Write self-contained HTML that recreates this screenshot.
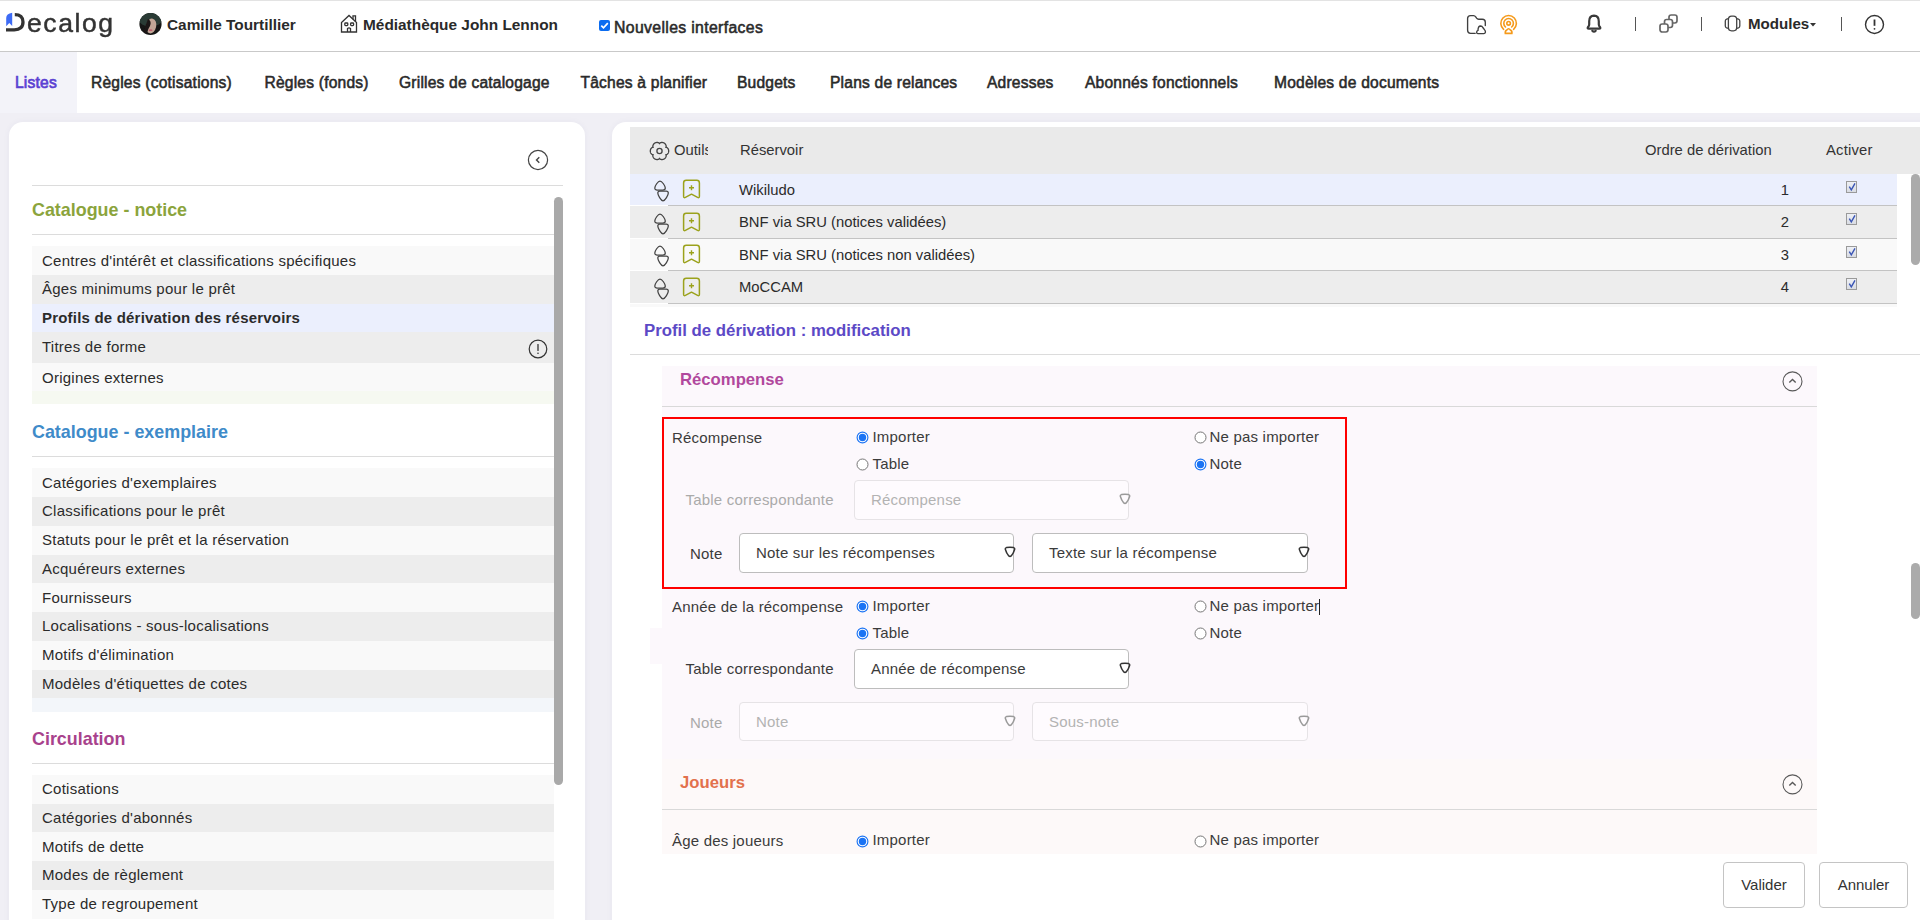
<!DOCTYPE html>
<html><head><meta charset="utf-8">
<style>
*{box-sizing:border-box;margin:0;padding:0}
html,body{width:1920px;height:920px;overflow:hidden}
body{background:#f0eff5;font-family:"Liberation Sans",sans-serif;color:#2b2b2b;position:relative}
.a{position:absolute;white-space:nowrap}
#hdr{position:absolute;left:0;top:0;width:1920px;height:52px;background:#fff;border-top:1px solid #e3e3e3;border-bottom:1px solid #c9c9c9}
#nav{position:absolute;left:0;top:52px;width:1920px;height:61px;background:#fff}
.tab{position:absolute;top:74px;font-size:15.6px;font-weight:400;color:#2a2a2a;line-height:18px;-webkit-text-stroke-width:.55px;letter-spacing:.2px}
#lp{position:absolute;left:9px;top:122px;width:576px;height:820px;background:#fff;border-radius:14px;box-shadow:0 0 6px rgba(60,50,120,.05)}
#rp{position:absolute;left:612px;top:122px;width:1330px;height:820px;background:#fff;border-radius:14px;box-shadow:0 0 6px rgba(60,50,120,.05)}
.sec{position:absolute;left:32px;font-size:17.9px;font-weight:700;line-height:20px}
.hl{position:absolute;height:1px;background:#dcdcdc}
.row{position:absolute;left:32px;width:522px;height:29px;font-size:15px;letter-spacing:.25px;line-height:29px;padding-left:10px;color:#2b2b2b}
.r0{background:#f9f9f9}.r1{background:#ededed}
.th{top:141px;font-size:14.8px;line-height:18px;color:#333}
.td{font-size:14.8px;line-height:18px;color:#2b2b2b}
.cb{left:1846px;width:11px;height:12px;border:1px solid #9a9a9a;background:linear-gradient(#eef0f5,#d9dce3)}
.sh{font-size:16.7px;font-weight:700;line-height:20px}
.fl{font-size:15px;line-height:18px;letter-spacing:.2px}
.btn{top:862px;height:46px;border:1px solid #c4c4c4;border-radius:4px;background:#fff;font-size:15px;line-height:44px;text-align:center;color:#333}
</style></head><body>
<div id="hdr"></div>
<div id="nav"></div>
<div class="a" style="left:0;top:52px;width:77px;height:61px;background:#f3f3f9"></div>


<!-- header content -->
<svg class="a" style="left:4px;top:10px" width="24" height="26" viewBox="0 0 24 26">
  <path d="M2.2 16.2 V8 Q2.2 3.6 8.2 2.8 V16 L5.3 13 Z" fill="#3d6bf5"/>
  <path d="M2 19.8 L10.3 19.8 Q19 19.8 19 12 Q19 4.6 10.8 4.6" fill="none" stroke="#333" stroke-width="3.3"/>
</svg>
<div class="a" style="left:27px;top:5px;font-size:25.5px;letter-spacing:1.5px;color:#333;line-height:36px;-webkit-text-stroke:.45px #333;transform:scaleX(1.04);transform-origin:0 0">ecalog</div>
<svg class="a" style="left:139px;top:13px" width="23" height="23" viewBox="0 0 23 23">
<defs><clipPath id="av"><circle cx="11.5" cy="11" r="11.1"/></clipPath><filter id="bl"><feGaussianBlur stdDeviation=".6"/></filter></defs>
<g clip-path="url(#av)"><rect width="23" height="23" fill="#161615"/>
<ellipse cx="11.5" cy="5" rx="12" ry="9" fill="#2a3b35"/>
<g filter="url(#bl)"><ellipse cx="12.2" cy="13" rx="5" ry="7.5" fill="#c2a596" transform="rotate(12 12.2 13)"/>
<path d="M9 6 Q13 8 11 13 Q9 16 8 20 L5 20 Q6 12 9 6 Z" fill="#1e1714"/>
<ellipse cx="11.6" cy="17.2" rx="1.9" ry=".9" fill="#c0606e"/></g></g></svg>

<div class="a m" style="left:167px;top:16px;font-size:15.4px;font-weight:700;color:#2a2a2a;line-height:18px">Camille Tourtillier</div>
<svg class="a" style="left:340px;top:14px" width="19" height="19" viewBox="0 0 19 19" fill="none" stroke="#333" stroke-width="1.3">
  <path d="M1.5 18 V8.5 L9 1.5 L16.5 8.5 V18 Z"/><path d="M13 5.2 V1.8 H15.5 V7.5"/>
  <rect x="4.8" y="9" width="3" height="2.6" rx=".8"/><rect x="10.6" y="9" width="3" height="2.6" rx=".8"/>
  <path d="M7.5 18 V14.5 Q9 13.2 10.5 14.5 V18"/>
</svg>
<div class="a m" style="left:363px;top:16px;font-size:15.4px;font-weight:700;color:#2a2a2a;line-height:18px">Médiathèque John Lennon</div>
<div class="a" style="left:599px;top:20px;width:11px;height:11px;border-radius:2px;background:#0b6cf0"></div>
<svg class="a" style="left:599px;top:20px" width="11" height="11" viewBox="0 0 11 11"><path d="M2.3 5.6 L4.5 7.8 L8.8 3.2" fill="none" stroke="#fff" stroke-width="1.7"/></svg>
<div class="a m" style="left:614px;top:19px;font-size:15.8px;font-weight:400;color:#2a2a2a;line-height:18px;-webkit-text-stroke-width:.55px;letter-spacing:.35px">Nouvelles interfaces</div>

<svg class="a" style="left:1466px;top:14px" width="22" height="21" viewBox="0 0 22 21" fill="none" stroke="#3f3f3f" stroke-width="1.35" stroke-linejoin="round" stroke-linecap="round">
  <path d="M9.2 19.3 H4.6 Q1.6 19.3 1.6 16.3 V4.6 Q1.6 1.7 4.6 1.6 H7.6 Q8.9 1.6 9.7 2.8 L10.6 4.2 Q11.3 5.2 12.6 5.2 H16.3 Q19.3 5.2 19.3 8.2 V11.6"/>
  <path d="M11.9 19.6 Q10.6 19.6 10.6 18.2 Q10.6 16.8 12 16.4 Q12 12.1 14.6 12 Q16.1 12 16.8 13.5 L18.8 16.2 Q19.6 17.2 19.4 18.3 Q19.1 19.6 17.8 19.6 Z"/>
</svg>
<svg class="a" style="left:1499px;top:14px" width="20" height="21" viewBox="0 0 20 21" fill="none" stroke="#f59a1b" stroke-width="1.6" stroke-linecap="round">
  <circle cx="9.6" cy="9.3" r="1.8"/><path d="M6.5 13 A4.8 4.8 0 1 1 12.7 13"/><path d="M4.6 15.3 A7.8 7.8 0 1 1 14.6 15.3"/>
  <path d="M6.3 19.4 Q5.9 16.8 7.8 16 Q9.6 13.6 11.4 16 Q13.3 16.8 12.9 19.4 Z"/>
</svg>
<svg class="a" style="left:1584px;top:13px" width="20" height="21" viewBox="0 0 20 21" fill="none" stroke="#3a3a3a" stroke-width="2.2" stroke-linejoin="round" stroke-linecap="round">
  <path d="M10 2.6 Q14.8 2.8 14.8 8.2 V11.4 Q14.8 12.8 16 14 Q17 15.6 15.2 15.6 H4.8 Q3 15.6 4 14 Q5.2 12.8 5.2 11.4 V8.2 Q5.2 2.8 10 2.6 Z"/><path d="M8.3 17.8 Q10 19.6 11.7 17.8" stroke-width="2.2"/>
</svg>
<div class="a" style="left:1635px;top:17px;width:1px;height:14px;background:#555"></div>
<svg class="a" style="left:1658px;top:14px" width="22" height="20" viewBox="0 0 22 20" fill="#fff" stroke="#666" stroke-width="1.7">
  <rect x="11" y="1" width="8" height="8" rx="2.2"/><rect x="6.5" y="5.5" width="8" height="8" rx="2.2"/><rect x="2" y="10" width="8" height="8" rx="2.2"/>
</svg>
<div class="a" style="left:1701px;top:17px;width:1px;height:14px;background:#555"></div>
<svg class="a" style="left:1724px;top:15px" width="17" height="17" viewBox="0 0 17 17" fill="none" stroke="#444" stroke-width="1.3">
  <rect x="4.4" y="1.2" width="8.3" height="14.6" rx="3.2"/><path d="M4.4 3.6 L2.6 4.1 Q1.3 4.5 1.3 5.9 V11.1 Q1.3 12.5 2.6 12.9 L4.4 13.4"/><path d="M12.7 3.6 L14.5 4.1 Q15.8 4.5 15.8 5.9 V11.1 Q15.8 12.5 14.5 12.9 L12.7 13.4"/>
</svg>
<div class="a m" style="left:1748px;top:15px;font-size:15.1px;font-weight:700;color:#2a2a2a;line-height:18px">Modules</div>
<svg class="a" style="left:1810px;top:23px" width="6" height="4" viewBox="0 0 6 4"><path d="M0 0 H6 L3 3.5 Z" fill="#333"/></svg>
<div class="a" style="left:1841px;top:17px;width:1px;height:14px;background:#555"></div>
<svg class="a" style="left:1864px;top:14px" width="21" height="21" viewBox="0 0 21 21" fill="none" stroke="#333" stroke-width="1.4">
  <circle cx="10.5" cy="10.5" r="9"/><path d="M10.5 5.5 V11.8" stroke-width="1.8"/><circle cx="10.5" cy="14.8" r=".9" fill="#333" stroke="none"/>
</svg>

<!-- tabs -->
<div class="a m tab" style="left:15px;color:#5b41d2;-webkit-text-stroke-width:.7px">Listes</div>
<div class="a m tab" style="left:91px">Règles (cotisations)</div>
<div class="a m tab" style="left:264.5px">Règles (fonds)</div>
<div class="a m tab" style="left:399px">Grilles de catalogage</div>
<div class="a m tab" style="left:580.5px">Tâches à planifier</div>
<div class="a m tab" style="left:737px">Budgets</div>
<div class="a m tab" style="left:830px">Plans de relances</div>
<div class="a m tab" style="left:987px">Adresses</div>
<div class="a m tab" style="left:1085px">Abonnés fonctionnels</div>
<div class="a m tab" style="left:1274px">Modèles de documents</div>

<div id="lp"></div>
<svg class="a" style="left:527px;top:149px" width="22" height="22" viewBox="0 0 22 22" fill="none" stroke="#444" stroke-width="1.2"><circle cx="11" cy="11" r="9.6"/><path d="M12.3 8.2 L9.5 11 L12.3 13.8" stroke-width="1.4"/></svg>
<div class="hl" style="left:32px;top:185px;width:531px"></div>
<div class="a m sec" style="top:200px;color:#8ba43c">Catalogue - notice</div>
<div class="hl" style="left:32px;top:234px;width:522px"></div>
<div class="a m row r0" style="top:246px;">Centres d'intérêt et classifications spécifiques</div>
<div class="a m row r1" style="top:275px;line-height:27px;">Âges minimums pour le prêt</div>
<div class="a m row " style="top:304px;background:#ebeffd;font-weight:700;letter-spacing:.2px;line-height:27px;">Profils de dérivation des réservoirs</div>
<div class="a m row r1" style="top:332px;height:31px;line-height:29px;">Titres de forme</div>
<div class="a m row r0" style="top:363px;">Origines externes</div>
<div class="a" style="left:32px;top:391px;width:522px;height:13px;background:#f6f9f1"></div>
<div class="a m sec" style="top:422px;color:#3f8bc9">Catalogue - exemplaire</div>
<div class="hl" style="left:32px;top:456px;width:522px"></div>
<div class="a m row r0" style="top:468px;">Catégories d'exemplaires</div>
<div class="a m row r1" style="top:497px;line-height:27px;">Classifications pour le prêt</div>
<div class="a m row r0" style="top:526px;line-height:27px;">Statuts pour le prêt et la réservation</div>
<div class="a m row r1" style="top:555px;line-height:27px;">Acquéreurs externes</div>
<div class="a m row r0" style="top:583px;">Fournisseurs</div>
<div class="a m row r1" style="top:612px;line-height:27px;">Localisations - sous-localisations</div>
<div class="a m row r0" style="top:641px;line-height:27px;">Motifs d'élimination</div>
<div class="a m row r1" style="top:670px;line-height:27px;">Modèles d'étiquettes de cotes</div>
<div class="a" style="left:32px;top:698px;width:522px;height:14px;background:#f3f6fa"></div>
<div class="a m sec" style="top:729px;color:#a8428c">Circulation</div>
<div class="hl" style="left:32px;top:763px;width:522px"></div>
<div class="a m row r0" style="top:775px;line-height:27px;">Cotisations</div>
<div class="a m row r1" style="top:804px;line-height:27px;">Catégories d'abonnés</div>
<div class="a m row r0" style="top:832px;">Motifs de dette</div>
<div class="a m row r1" style="top:861px;line-height:27px;">Modes de règlement</div>
<div class="a m row r0" style="top:890px;line-height:27px;">Type de regroupement</div>
<svg class="a" style="left:527.5px;top:338.5px" width="20" height="20" viewBox="0 0 20 20" fill="none" stroke="#333" stroke-width="1.2"><circle cx="10" cy="10" r="8.8"/><path d="M10 5.6 V11.4" stroke-width="1.3" stroke-linecap="round"/><circle cx="10" cy="14.2" r=".8" fill="#333" stroke="none"/></svg>
<div class="a" style="left:554px;top:197px;width:9px;height:588px;border-radius:5px;background:#a9a9a9"></div>
<div id="rp"></div>
<div class="a" style="left:630px;top:127px;width:1290px;height:47px;background:#eaeaea"></div>
<svg class="a" style="left:649px;top:141px" width="21" height="20" viewBox="0 0 21 20" fill="none" stroke="#444" stroke-width="1.3" stroke-linejoin="round">
<path d="M10.50 2.70 L10.70 2.29 L10.91 2.09 L11.14 1.93 L11.36 1.81 L11.59 1.70 L11.83 1.62 L12.06 1.56 L12.30 1.51 L12.55 1.48 L12.79 1.46 L13.03 1.45 L13.27 1.47 L13.51 1.49 L13.75 1.53 L13.99 1.58 L14.22 1.65 L14.45 1.72 L14.67 1.82 L14.89 1.92 L15.10 2.03 L15.31 2.16 L15.50 2.30 L15.69 2.44 L15.87 2.60 L16.05 2.77 L16.21 2.95 L16.36 3.14 L16.50 3.33 L16.63 3.54 L16.75 3.75 L16.86 3.97 L16.95 4.19 L17.03 4.42 L17.09 4.66 L17.14 4.91 L17.17 5.16 L17.17 5.42 L17.15 5.68 L17.08 5.97 L16.82 6.35 L17.28 6.32 L17.56 6.40 L17.81 6.52 L18.03 6.65 L18.23 6.80 L18.42 6.96 L18.59 7.13 L18.76 7.32 L18.91 7.51 L19.04 7.71 L19.17 7.92 L19.28 8.13 L19.38 8.36 L19.46 8.58 L19.53 8.81 L19.59 9.04 L19.64 9.28 L19.67 9.52 L19.69 9.76 L19.70 10.00 L19.69 10.24 L19.67 10.48 L19.64 10.72 L19.59 10.96 L19.53 11.19 L19.46 11.42 L19.38 11.64 L19.28 11.87 L19.17 12.08 L19.04 12.29 L18.91 12.49 L18.76 12.68 L18.59 12.87 L18.42 13.04 L18.23 13.20 L18.03 13.35 L17.81 13.48 L17.56 13.60 L17.28 13.68 L16.82 13.65 L17.08 14.03 L17.15 14.32 L17.17 14.58 L17.17 14.84 L17.14 15.09 L17.09 15.34 L17.03 15.58 L16.95 15.81 L16.86 16.03 L16.75 16.25 L16.63 16.46 L16.50 16.67 L16.36 16.86 L16.21 17.05 L16.05 17.23 L15.87 17.40 L15.69 17.56 L15.50 17.70 L15.31 17.84 L15.10 17.97 L14.89 18.08 L14.67 18.18 L14.45 18.28 L14.22 18.35 L13.99 18.42 L13.75 18.47 L13.51 18.51 L13.27 18.53 L13.03 18.55 L12.79 18.54 L12.55 18.52 L12.30 18.49 L12.06 18.44 L11.83 18.38 L11.59 18.30 L11.36 18.19 L11.14 18.07 L10.91 17.91 L10.70 17.71 L10.50 17.30 L10.30 17.71 L10.09 17.91 L9.86 18.07 L9.64 18.19 L9.41 18.30 L9.17 18.38 L8.94 18.44 L8.70 18.49 L8.45 18.52 L8.21 18.54 L7.97 18.55 L7.73 18.53 L7.49 18.51 L7.25 18.47 L7.01 18.42 L6.78 18.35 L6.55 18.28 L6.33 18.18 L6.11 18.08 L5.90 17.97 L5.69 17.84 L5.50 17.70 L5.31 17.56 L5.13 17.40 L4.95 17.23 L4.79 17.05 L4.64 16.86 L4.50 16.67 L4.37 16.46 L4.25 16.25 L4.14 16.03 L4.05 15.81 L3.97 15.58 L3.91 15.34 L3.86 15.09 L3.83 14.84 L3.83 14.58 L3.85 14.32 L3.92 14.03 L4.18 13.65 L3.72 13.68 L3.44 13.60 L3.19 13.48 L2.97 13.35 L2.77 13.20 L2.58 13.04 L2.41 12.87 L2.24 12.68 L2.09 12.49 L1.96 12.29 L1.83 12.08 L1.72 11.87 L1.62 11.64 L1.54 11.42 L1.47 11.19 L1.41 10.96 L1.36 10.72 L1.33 10.48 L1.31 10.24 L1.30 10.00 L1.31 9.76 L1.33 9.52 L1.36 9.28 L1.41 9.04 L1.47 8.81 L1.54 8.58 L1.62 8.36 L1.72 8.13 L1.83 7.92 L1.96 7.71 L2.09 7.51 L2.24 7.32 L2.41 7.13 L2.58 6.96 L2.77 6.80 L2.97 6.65 L3.19 6.52 L3.44 6.40 L3.72 6.32 L4.18 6.35 L3.92 5.97 L3.85 5.68 L3.83 5.42 L3.83 5.16 L3.86 4.91 L3.91 4.66 L3.97 4.42 L4.05 4.19 L4.14 3.97 L4.25 3.75 L4.37 3.54 L4.50 3.33 L4.64 3.14 L4.79 2.95 L4.95 2.77 L5.13 2.60 L5.31 2.44 L5.50 2.30 L5.69 2.16 L5.90 2.03 L6.11 1.92 L6.33 1.82 L6.55 1.72 L6.78 1.65 L7.01 1.58 L7.25 1.53 L7.49 1.49 L7.73 1.47 L7.97 1.45 L8.21 1.46 L8.45 1.48 L8.70 1.51 L8.94 1.56 L9.17 1.62 L9.41 1.70 L9.64 1.81 L9.86 1.93 L10.09 2.09 L10.30 2.29 Z"/>
<circle cx="10.5" cy="10" r="2.6"/></svg>
<div class="a" style="left:674px;top:141px;width:34px;overflow:hidden;font-size:14.8px;line-height:18px;color:#333">Outils</div>
<div class="a m th" style="left:740px">Réservoir</div>
<div class="a m th" style="left:1645px">Ordre de dérivation</div>
<div class="a m th" style="left:1826px;letter-spacing:.2px">Activer</div>
<div class="a" style="left:630px;top:174px;width:1267px;height:31px;background:#ebeffd"></div>
<div class="a" style="left:668px;top:205px;width:1229px;height:1px;background:#c3c3c3"></div>
<svg class="a" style="left:653px;top:180px" width="17" height="22" viewBox="0 0 17 22" fill="none" stroke="#444" stroke-width="1.25" stroke-linejoin="round"><path d="M7 1 C9 1 12.3 6 12.3 8 C12.3 9.5 11.2 10 9.8 10 H4.2 C2.8 10 1.8 9.5 1.8 8 C1.8 6 5 1 7 1 Z"/><path d="M6.9 11 H13.2 C14.6 11 15.3 11.6 15.3 13 C15.3 15 12.2 20.8 10 20.8 C7.9 20.8 4.8 15 4.8 13 C4.8 11.6 5.5 11 6.9 11 Z"/></svg>
<svg class="a" style="left:682px;top:179px" width="19" height="21" viewBox="0 0 19 21" fill="none" stroke="#9ba21c" stroke-width="1.5" stroke-linejoin="round"><path d="M4.2 1.3 H14.8 Q17.4 1.3 17.4 3.9 V17.2 Q17.4 19.2 15.6 18.4 L9.5 15.2 L3.4 18.4 Q1.6 19.2 1.6 17.2 V3.9 Q1.6 1.3 4.2 1.3 Z"/><path d="M9.5 6.3 V11.3 M7 8.8 H12" stroke-width="1.4"/></svg>
<div class="a m td" style="left:739px;top:181px">Wikiludo</div>
<div class="a m td" style="left:1700px;width:89px;text-align:right;top:181px">1</div>
<div class="a cb" style="top:181px"></div>
<svg class="a" style="left:1847px;top:182px" width="10" height="10" viewBox="0 0 10 10"><path d="M2.3 4.6 L4.3 7.8 L8 1.3" fill="none" stroke="#3a55b5" stroke-width="1.4"/></svg>
<div class="a" style="left:630px;top:206px;width:1267px;height:32px;background:#ededed"></div>
<div class="a" style="left:668px;top:238px;width:1229px;height:1px;background:#c3c3c3"></div>
<svg class="a" style="left:653px;top:213px" width="17" height="22" viewBox="0 0 17 22" fill="none" stroke="#444" stroke-width="1.25" stroke-linejoin="round"><path d="M7 1 C9 1 12.3 6 12.3 8 C12.3 9.5 11.2 10 9.8 10 H4.2 C2.8 10 1.8 9.5 1.8 8 C1.8 6 5 1 7 1 Z"/><path d="M6.9 11 H13.2 C14.6 11 15.3 11.6 15.3 13 C15.3 15 12.2 20.8 10 20.8 C7.9 20.8 4.8 15 4.8 13 C4.8 11.6 5.5 11 6.9 11 Z"/></svg>
<svg class="a" style="left:682px;top:212px" width="19" height="21" viewBox="0 0 19 21" fill="none" stroke="#9ba21c" stroke-width="1.5" stroke-linejoin="round"><path d="M4.2 1.3 H14.8 Q17.4 1.3 17.4 3.9 V17.2 Q17.4 19.2 15.6 18.4 L9.5 15.2 L3.4 18.4 Q1.6 19.2 1.6 17.2 V3.9 Q1.6 1.3 4.2 1.3 Z"/><path d="M9.5 6.3 V11.3 M7 8.8 H12" stroke-width="1.4"/></svg>
<div class="a m td" style="left:739px;top:213px">BNF via SRU (notices validées)</div>
<div class="a m td" style="left:1700px;width:89px;text-align:right;top:213px">2</div>
<div class="a cb" style="top:213px"></div>
<svg class="a" style="left:1847px;top:214px" width="10" height="10" viewBox="0 0 10 10"><path d="M2.3 4.6 L4.3 7.8 L8 1.3" fill="none" stroke="#3a55b5" stroke-width="1.4"/></svg>
<div class="a" style="left:630px;top:239px;width:1267px;height:31px;background:#f9f9f9"></div>
<div class="a" style="left:668px;top:270px;width:1229px;height:1px;background:#c3c3c3"></div>
<svg class="a" style="left:653px;top:245px" width="17" height="22" viewBox="0 0 17 22" fill="none" stroke="#444" stroke-width="1.25" stroke-linejoin="round"><path d="M7 1 C9 1 12.3 6 12.3 8 C12.3 9.5 11.2 10 9.8 10 H4.2 C2.8 10 1.8 9.5 1.8 8 C1.8 6 5 1 7 1 Z"/><path d="M6.9 11 H13.2 C14.6 11 15.3 11.6 15.3 13 C15.3 15 12.2 20.8 10 20.8 C7.9 20.8 4.8 15 4.8 13 C4.8 11.6 5.5 11 6.9 11 Z"/></svg>
<svg class="a" style="left:682px;top:244px" width="19" height="21" viewBox="0 0 19 21" fill="none" stroke="#9ba21c" stroke-width="1.5" stroke-linejoin="round"><path d="M4.2 1.3 H14.8 Q17.4 1.3 17.4 3.9 V17.2 Q17.4 19.2 15.6 18.4 L9.5 15.2 L3.4 18.4 Q1.6 19.2 1.6 17.2 V3.9 Q1.6 1.3 4.2 1.3 Z"/><path d="M9.5 6.3 V11.3 M7 8.8 H12" stroke-width="1.4"/></svg>
<div class="a m td" style="left:739px;top:246px">BNF via SRU (notices non validées)</div>
<div class="a m td" style="left:1700px;width:89px;text-align:right;top:246px">3</div>
<div class="a cb" style="top:246px"></div>
<svg class="a" style="left:1847px;top:247px" width="10" height="10" viewBox="0 0 10 10"><path d="M2.3 4.6 L4.3 7.8 L8 1.3" fill="none" stroke="#3a55b5" stroke-width="1.4"/></svg>
<div class="a" style="left:630px;top:271px;width:1267px;height:32px;background:#ededed"></div>
<div class="a" style="left:668px;top:303px;width:1229px;height:1px;background:#c3c3c3"></div>
<svg class="a" style="left:653px;top:278px" width="17" height="22" viewBox="0 0 17 22" fill="none" stroke="#444" stroke-width="1.25" stroke-linejoin="round"><path d="M7 1 C9 1 12.3 6 12.3 8 C12.3 9.5 11.2 10 9.8 10 H4.2 C2.8 10 1.8 9.5 1.8 8 C1.8 6 5 1 7 1 Z"/><path d="M6.9 11 H13.2 C14.6 11 15.3 11.6 15.3 13 C15.3 15 12.2 20.8 10 20.8 C7.9 20.8 4.8 15 4.8 13 C4.8 11.6 5.5 11 6.9 11 Z"/></svg>
<svg class="a" style="left:682px;top:277px" width="19" height="21" viewBox="0 0 19 21" fill="none" stroke="#9ba21c" stroke-width="1.5" stroke-linejoin="round"><path d="M4.2 1.3 H14.8 Q17.4 1.3 17.4 3.9 V17.2 Q17.4 19.2 15.6 18.4 L9.5 15.2 L3.4 18.4 Q1.6 19.2 1.6 17.2 V3.9 Q1.6 1.3 4.2 1.3 Z"/><path d="M9.5 6.3 V11.3 M7 8.8 H12" stroke-width="1.4"/></svg>
<div class="a m td" style="left:739px;top:278px">MoCCAM</div>
<div class="a m td" style="left:1700px;width:89px;text-align:right;top:278px">4</div>
<div class="a cb" style="top:278px"></div>
<svg class="a" style="left:1847px;top:279px" width="10" height="10" viewBox="0 0 10 10"><path d="M2.3 4.6 L4.3 7.8 L8 1.3" fill="none" stroke="#3a55b5" stroke-width="1.4"/></svg>
<div class="a" style="left:630px;top:304px;width:1267px;height:3px;background:#f9f9f9"></div>
<div class="a" style="left:1911px;top:174px;width:9px;height:91px;border-radius:5px;background:#ababab"></div>
<div class="a m" style="left:644px;top:321px;font-size:16.8px;font-weight:700;color:#5c49c6;line-height:20px;letter-spacing:0">Profil de dérivation : modification</div>
<div class="hl" style="left:630px;top:354px;width:1290px"></div>
<div class="a" style="left:662px;top:366px;width:1155px;height:393px;background:#fcf8fc"></div>
<div class="a" style="left:662px;top:759px;width:1155px;height:95px;background:#fdf9f9"></div>
<div class="a" style="left:650px;top:628px;width:12px;height:36px;background:#fcf8fc"></div>
<div class="a m sh" style="left:680px;top:370px;color:#b1489d">Récompense</div>
<div class="hl" style="left:662px;top:406px;width:1155px;background:#d9d9d9"></div>
<svg class="a" style="left:1781px;top:370px" width="23" height="23" viewBox="0 0 23 23" fill="none" stroke="#595959" stroke-width="1.1"><circle cx="11.5" cy="11.4" r="9.5"/><path d="M8.3 12.6 L11.5 9.5 L14.7 12.6" stroke-width="1.4"/></svg>
<div class="a m sh" style="left:680px;top:773px;color:#e2714d">Joueurs</div>
<div class="hl" style="left:662px;top:809px;width:1155px;background:#d9d9d9"></div>
<svg class="a" style="left:1781px;top:773px" width="23" height="23" viewBox="0 0 23 23" fill="none" stroke="#595959" stroke-width="1.1"><circle cx="11.5" cy="11.4" r="9.5"/><path d="M8.3 12.6 L11.5 9.5 L14.7 12.6" stroke-width="1.4"/></svg>
<div class="a" style="left:662px;top:417px;width:685px;height:172px;border:2px solid #ff0000"></div>
<div class="a m fl" style="left:672px;top:429px;color:#3b3b3b;">Récompense</div>
<svg class="a" style="left:856.0px;top:431.3px" width="13" height="13" viewBox="0 0 13 13"><circle cx="6.5" cy="6.5" r="5.4" fill="#fff" stroke="#1a73f4" stroke-width="1.15"/><circle cx="6.5" cy="6.5" r="3.7" fill="#1a73f4"/></svg>
<div class="a m fl" style="left:872.5px;top:428px;color:#3b3b3b;">Importer</div>
<svg class="a" style="left:856.0px;top:458.0px" width="13" height="13" viewBox="0 0 13 13"><circle cx="6.5" cy="6.5" r="5.5" fill="#fff" stroke="#767676" stroke-width="1"/></svg>
<div class="a m fl" style="left:872.5px;top:455px;color:#3b3b3b;">Table</div>
<svg class="a" style="left:1193.5px;top:431.3px" width="13" height="13" viewBox="0 0 13 13"><circle cx="6.5" cy="6.5" r="5.5" fill="#fff" stroke="#767676" stroke-width="1"/></svg>
<div class="a m fl" style="left:1209.5px;top:428px;color:#3b3b3b;">Ne pas importer</div>
<svg class="a" style="left:1193.5px;top:458.0px" width="13" height="13" viewBox="0 0 13 13"><circle cx="6.5" cy="6.5" r="5.4" fill="#fff" stroke="#1a73f4" stroke-width="1.15"/><circle cx="6.5" cy="6.5" r="3.7" fill="#1a73f4"/></svg>
<div class="a m fl" style="left:1209.5px;top:455px;color:#3b3b3b;">Note</div>
<div class="a m fl" style="left:685.5px;top:491px;color:#aaaaaa;">Table correspondante</div>
<div class="a" style="left:854px;top:480px;width:275px;height:40px;border:1px solid #e6e3e6;border-radius:4px;background:#fefbfe"></div><div class="a m fl" style="left:871px;top:491px;color:#b3b3b3;">Récompense</div><svg class="a" style="left:1118.7px;top:493.0px" width="12" height="12" viewBox="0 0 12 12"><path d="M2.4 1.6 Q6 0.9 9.6 1.6 Q11 2 10.6 3.5 Q9.6 7.2 7.2 9.9 Q6 11 4.8 9.9 Q2.4 7.2 1.4 3.5 Q1 2 2.4 1.6 Z" fill="none" stroke="#9a9a9a" stroke-width="1.5" stroke-linejoin="round"/></svg>
<div class="a m fl" style="left:690px;top:545px;color:#3b3b3b;">Note</div>
<div class="a" style="left:739px;top:533px;width:275px;height:40px;border:1px solid #bdbdbd;border-radius:4px;background:#fff"></div><div class="a m fl" style="left:756px;top:544px;color:#3b3b3b;">Note sur les récompenses</div><svg class="a" style="left:1003.7px;top:546.0px" width="12" height="12" viewBox="0 0 12 12"><path d="M2.4 1.6 Q6 0.9 9.6 1.6 Q11 2 10.6 3.5 Q9.6 7.2 7.2 9.9 Q6 11 4.8 9.9 Q2.4 7.2 1.4 3.5 Q1 2 2.4 1.6 Z" fill="none" stroke="#333" stroke-width="1.5" stroke-linejoin="round"/></svg>
<div class="a" style="left:1032px;top:533px;width:276px;height:40px;border:1px solid #bdbdbd;border-radius:4px;background:#fff"></div><div class="a m fl" style="left:1049px;top:544px;color:#3b3b3b;">Texte sur la récompense</div><svg class="a" style="left:1297.7px;top:546.0px" width="12" height="12" viewBox="0 0 12 12"><path d="M2.4 1.6 Q6 0.9 9.6 1.6 Q11 2 10.6 3.5 Q9.6 7.2 7.2 9.9 Q6 11 4.8 9.9 Q2.4 7.2 1.4 3.5 Q1 2 2.4 1.6 Z" fill="none" stroke="#333" stroke-width="1.5" stroke-linejoin="round"/></svg>
<div class="a m fl" style="left:672px;top:598px;color:#3b3b3b;">Année de la récompense</div>
<svg class="a" style="left:856.0px;top:600.3px" width="13" height="13" viewBox="0 0 13 13"><circle cx="6.5" cy="6.5" r="5.4" fill="#fff" stroke="#1a73f4" stroke-width="1.15"/><circle cx="6.5" cy="6.5" r="3.7" fill="#1a73f4"/></svg>
<div class="a m fl" style="left:872.5px;top:597px;color:#3b3b3b;">Importer</div>
<svg class="a" style="left:856.0px;top:627.1px" width="13" height="13" viewBox="0 0 13 13"><circle cx="6.5" cy="6.5" r="5.4" fill="#fff" stroke="#1a73f4" stroke-width="1.15"/><circle cx="6.5" cy="6.5" r="3.7" fill="#1a73f4"/></svg>
<div class="a m fl" style="left:872.5px;top:624px;color:#3b3b3b;">Table</div>
<svg class="a" style="left:1193.5px;top:600.3px" width="13" height="13" viewBox="0 0 13 13"><circle cx="6.5" cy="6.5" r="5.5" fill="#fff" stroke="#767676" stroke-width="1"/></svg>
<div class="a m fl" style="left:1209.5px;top:597px;color:#3b3b3b;">Ne pas importer</div>
<div class="a" style="left:1319px;top:599px;width:1px;height:16px;background:#222"></div>
<svg class="a" style="left:1193.5px;top:627.1px" width="13" height="13" viewBox="0 0 13 13"><circle cx="6.5" cy="6.5" r="5.5" fill="#fff" stroke="#767676" stroke-width="1"/></svg>
<div class="a m fl" style="left:1209.5px;top:624px;color:#3b3b3b;">Note</div>
<div class="a m fl" style="left:685.5px;top:660px;color:#3b3b3b;">Table correspondante</div>
<div class="a" style="left:854px;top:649px;width:275px;height:40px;border:1px solid #bdbdbd;border-radius:4px;background:#fff"></div><div class="a m fl" style="left:871px;top:660px;color:#3b3b3b;">Année de récompense</div><svg class="a" style="left:1118.7px;top:662.0px" width="12" height="12" viewBox="0 0 12 12"><path d="M2.4 1.6 Q6 0.9 9.6 1.6 Q11 2 10.6 3.5 Q9.6 7.2 7.2 9.9 Q6 11 4.8 9.9 Q2.4 7.2 1.4 3.5 Q1 2 2.4 1.6 Z" fill="none" stroke="#333" stroke-width="1.5" stroke-linejoin="round"/></svg>
<div class="a m fl" style="left:690px;top:714px;color:#aaaaaa;">Note</div>
<div class="a" style="left:739px;top:702px;width:275px;height:39px;border:1px solid #e6e3e6;border-radius:4px;background:#fefbfe"></div><div class="a m fl" style="left:756px;top:713px;color:#b3b3b3;">Note</div><svg class="a" style="left:1003.7px;top:714.5px" width="12" height="12" viewBox="0 0 12 12"><path d="M2.4 1.6 Q6 0.9 9.6 1.6 Q11 2 10.6 3.5 Q9.6 7.2 7.2 9.9 Q6 11 4.8 9.9 Q2.4 7.2 1.4 3.5 Q1 2 2.4 1.6 Z" fill="none" stroke="#9a9a9a" stroke-width="1.5" stroke-linejoin="round"/></svg>
<div class="a" style="left:1032px;top:702px;width:276px;height:39px;border:1px solid #e6e3e6;border-radius:4px;background:#fefbfe"></div><div class="a m fl" style="left:1049px;top:713px;color:#b3b3b3;">Sous-note</div><svg class="a" style="left:1297.7px;top:714.5px" width="12" height="12" viewBox="0 0 12 12"><path d="M2.4 1.6 Q6 0.9 9.6 1.6 Q11 2 10.6 3.5 Q9.6 7.2 7.2 9.9 Q6 11 4.8 9.9 Q2.4 7.2 1.4 3.5 Q1 2 2.4 1.6 Z" fill="none" stroke="#9a9a9a" stroke-width="1.5" stroke-linejoin="round"/></svg>
<div class="a m fl" style="left:672px;top:832px;color:#3b3b3b;">Âge des joueurs</div>
<svg class="a" style="left:856.0px;top:834.5px" width="13" height="13" viewBox="0 0 13 13"><circle cx="6.5" cy="6.5" r="5.4" fill="#fff" stroke="#1a73f4" stroke-width="1.15"/><circle cx="6.5" cy="6.5" r="3.7" fill="#1a73f4"/></svg>
<div class="a m fl" style="left:872.5px;top:831px;color:#3b3b3b;">Importer</div>
<svg class="a" style="left:1193.5px;top:834.5px" width="13" height="13" viewBox="0 0 13 13"><circle cx="6.5" cy="6.5" r="5.5" fill="#fff" stroke="#767676" stroke-width="1"/></svg>
<div class="a m fl" style="left:1209.5px;top:831px;color:#3b3b3b;">Ne pas importer</div>
<div class="a btn" style="left:1723px;width:82px">Valider</div>
<div class="a btn" style="left:1819px;width:89px">Annuler</div>
<div class="a" style="left:1911px;top:563px;width:9px;height:56px;border-radius:5px;background:#ababab"></div>
</body></html>
